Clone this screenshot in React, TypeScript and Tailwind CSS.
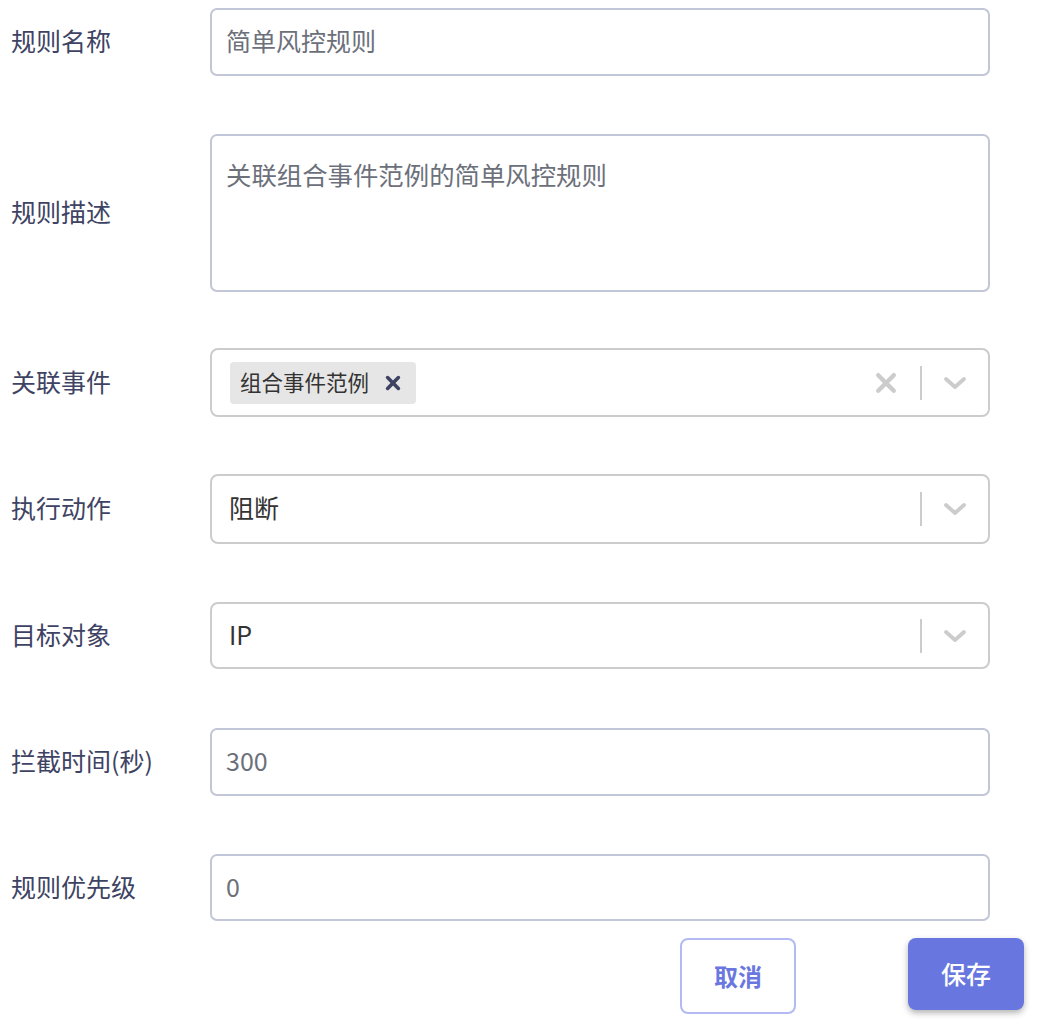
import React from "react";

const font = { fontFamily: '"Noto Sans CJK SC", "Liberation Sans", sans-serif' };

function Label({ children }: { children: React.ReactNode }) {
  return (
    <div className="w-[199px] shrink-0 text-[25px] leading-none text-[#3e4363] -mt-[3px]">{children}</div>
  );
}

function Chevron() {
  return (
    <svg width="24" height="14" viewBox="0 0 24 14" className="text-[#cccccc]">
      <polyline
        points="3,3 12,11 21,3"
        fill="none"
        stroke="currentColor"
        strokeWidth="3.8"
        strokeLinecap="round"
        strokeLinejoin="round"
      />
    </svg>
  );
}

function Cross({ size, stroke, className }: { size: number; stroke: number; className?: string }) {
  return (
    <svg width={size} height={size} viewBox="0 0 20 20" className={className}>
      <path
        d="M4 4 L16 16 M16 4 L4 16"
        fill="none"
        stroke="currentColor"
        strokeWidth={stroke}
        strokeLinecap="round"
      />
    </svg>
  );
}

function Indicators({ clear }: { clear?: boolean }) {
  return (
    <div className="flex items-center h-full">
      {clear && (
        <div className="w-[36px] flex justify-center">
          <Cross size={26} stroke={3.4} className="text-[#cccccc]" />
        </div>
      )}
      <div className="w-[2px] h-[34px] bg-[#cccccc] ml-[16px]" />
      <div className="w-[66px] flex justify-center">
        <Chevron />
      </div>
    </div>
  );
}

export default function App() {
  return (
    <div className="bg-white w-[1048px] h-[1034px] overflow-hidden pl-[11px] pt-[8px]" style={font}>
      <div className="flex items-center">
        <Label>规则名称</Label>
        <div className="w-[780px] h-[68px] border-2 border-[#c1c7d9] rounded-[7px] flex items-center pl-[14px] text-[25px] text-[#6c707b]">
          <span className="-mt-[2px]">简单风控规则</span>
        </div>
      </div>

      <div className="flex items-center mt-[58px]">
        <Label>规则描述</Label>
        <div className="w-[780px] h-[158px] border-2 border-[#c1c7d9] rounded-[7px] pl-[14px] pt-[26px] text-[25.4px] leading-none text-[#6c707b]">
          关联组合事件范例的简单风控规则
        </div>
      </div>

      <div className="flex items-center mt-[56px]">
        <Label>关联事件</Label>
        <div className="w-[780px] h-[69px] border-2 border-[#cccccc] rounded-[8px] flex items-center justify-between">
          <div className="pl-[18px]">
            <div className="h-[42px] bg-[#e6e6e6] rounded-[4px] flex items-center pl-[10px] pr-[14px] text-[21.5px] text-[#333333]">
              组合事件范例
              <Cross size={18} stroke={4} className="text-[#3e4363] ml-[15px]" />
            </div>
          </div>
          <Indicators clear />
        </div>
      </div>

      <div className="flex items-center mt-[57px]">
        <Label>执行动作</Label>
        <div className="w-[780px] h-[70px] border-2 border-[#cccccc] rounded-[8px] flex items-center justify-between">
          <div className="pl-[17px] text-[25px] text-[#333333] -mt-[2px]">阻断</div>
          <Indicators />
        </div>
      </div>

      <div className="flex items-center mt-[58px]">
        <Label>目标对象</Label>
        <div className="w-[780px] h-[67px] border-2 border-[#cccccc] rounded-[8px] flex items-center justify-between">
          <div className="pl-[17px] text-[25px] text-[#333333] -mt-[2px]">IP</div>
          <Indicators />
        </div>
      </div>

      <div className="flex items-center mt-[59px]">
        <Label>拦截时间(秒)</Label>
        <div className="w-[780px] h-[68px] border-2 border-[#c1c7d9] rounded-[7px] flex items-center pl-[14px] text-[25px] text-[#6c707b]">
          <span className="-mt-[2px]">300</span>
        </div>
      </div>

      <div className="flex items-center mt-[58px]">
        <Label>规则优先级</Label>
        <div className="w-[780px] h-[67px] border-2 border-[#c1c7d9] rounded-[7px] flex items-center pl-[14px] text-[25px] text-[#6c707b]">
          <span className="-mt-[2px]">0</span>
        </div>
      </div>

      <div className="flex items-start mt-[17px] pl-[669px]">
        <div className="w-[116px] h-[76px] border-2 border-[#b3baf3] rounded-[8px] flex items-center justify-center text-[24px] font-bold text-[#6a77e0]">
          取消
        </div>
        <div className="w-[116px] h-[72px] ml-[112px] bg-[#6877e0] rounded-[8px] flex items-center justify-center text-[25px] font-medium text-white shadow-[0_3px_6px_rgba(0,0,0,0.3)]">
          保存
        </div>
      </div>
    </div>
  );
}
